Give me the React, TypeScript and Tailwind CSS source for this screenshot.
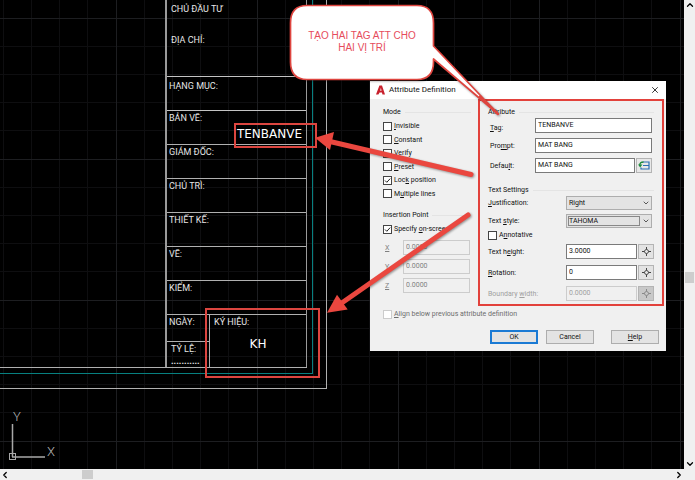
import type {ReactNode} from 'react';
import {ChevronDown, ChevronLeft, ChevronRight, ChevronUp, X} from 'lucide-react';

const modes = [
    {id: 'invisible', label: <><u>I</u>nvisible</>, checked: false},
    {id: 'constant', label: <><u>C</u>onstant</>, checked: false},
    {id: 'verify', label: <><u>V</u>erify</>, checked: false},
    {id: 'preset', label: <><u>P</u>reset</>, checked: false},
    {id: 'lock', label: <>Loc<u>k</u> position</>, checked: true},
    {id: 'multiple', label: <>M<u>u</u>ltiple lines</>, checked: false},
];

const titleRows = ['BẢN VẼ:', 'GIÁM ĐỐC:', 'CHỦ TRÌ:', 'THIẾT KẾ:', 'VẼ:', 'KIỂM:'];

function CheckRow({id, label, checked = false, disabled = false}: {
    id: string, label: ReactNode, checked?: boolean, disabled?: boolean
}) {
    return (
        <div className={disabled ? 'flex h-[10px] items-center text-[#6d6d6d]' : 'flex h-[10px] items-center'}>
            <span className="relative mr-[2px] h-[9px] w-[9px]">
                <input
                    id={id}
                    type="checkbox"
                    defaultChecked={checked}
                    disabled={disabled}
                    className="peer block h-[9px] w-[9px] appearance-none border border-[#444] bg-white disabled:border-[#ccc]"
                />
                <svg viewBox="0 0 9 9" className="pointer-events-none absolute inset-0 hidden peer-checked:block">
                    <path d="M2 4.5 L3.8 6.3 L7.2 2.6" fill="none" stroke="#222" strokeWidth="1"/>
                </svg>
            </span>
            <label htmlFor={id} className="whitespace-nowrap">{label}</label>
        </div>
    );
}

function Legend({children}: { children: ReactNode }) {
    return (
        <div className="flex h-[10px] items-center gap-1">
            <h3 className="whitespace-nowrap">{children}</h3>
            <span className="h-px flex-1 bg-[#e4e4e4]"/>
        </div>
    );
}

function PickButton({label, disabled = false}: { label: string, disabled?: boolean }) {
    return (
        <button
            aria-label={label}
            disabled={disabled}
            className="ml-px flex h-[15px] w-[16px] items-center justify-center border border-[#b4b4b4] bg-[#e3e3e3] text-[#444] disabled:bg-[#c8c8c8] disabled:text-[#888]"
        >
            <svg viewBox="0 0 11 11" className="h-[11px] w-[11px]">
                <path d="M5.5 1 V3.5 M5.5 7.5 V10 M1 5.5 H3.5 M7.5 5.5 H10" stroke="currentColor" strokeWidth="1"/>
                <circle cx="5.5" cy="5.5" r="2" fill="none" stroke="currentColor" strokeWidth="0.9"/>
            </svg>
        </button>
    );
}

function TitleBlock() {
    return (
        <div className="absolute left-0 top-0 h-[389px] w-[327px] border-b border-r border-[#b0b0b0] pb-[14px] pr-[13px]">
            <div className="h-full border-b border-r border-[#078080] pb-[5px] pr-[5px]">
                <div className="flex h-full justify-end border-b border-[#b0b0b0]">
                    <div className="flex w-[142px] flex-col border-l-2 border-r border-[#9a9a9a] font-['Roboto','Noto_Sans',sans-serif] text-[9px] leading-[10px] text-[#e6e6e6]">
                        <div className="h-[77px] border-b border-[#c4c4c4] pl-1 pt-1">
                            <p>CHỦ ĐẦU TƯ</p>
                            <p className="mt-[21px]">ĐỊA CHỈ:</p>
                        </div>
                        <div className="h-[34px] border-b border-[#c4c4c4] pl-[2px] pt-1">HẠNG MỤC:</div>
                        {titleRows.map((row) => (
                            <div key={row} className="relative h-[34px] border-b border-[#b0b0b0] pl-[2px] pt-[2px]">
                                {row}
                                {row === 'BẢN VẼ:' && (
                                    <span className="absolute right-1 top-4 font-['DejaVu_Sans',sans-serif] text-[12px] leading-[14px] text-white">
                                        TENBANVE
                                    </span>
                                )}
                            </div>
                        ))}
                        <div className="flex flex-1">
                            <div className="flex w-[43px] flex-col border-r border-[#b0b0b0]">
                                <div className="h-[27px] border-b border-[#b0b0b0] pl-[2px] pt-[2px]">NGÀY:</div>
                                <div className="pl-1 pt-[2px]">
                                    <p>TỶ LỆ:</p>
                                    <p className="mt-[2px] font-bold">...........</p>
                                </div>
                            </div>
                            <div className="flex-1 px-1 pt-[2px]">
                                <p>KÝ HIỆU:</p>
                                <p className="mt-[10px] text-center font-['DejaVu_Sans',sans-serif] text-[12px] leading-[14px] text-white">
                                    KH
                                </p>
                            </div>
                        </div>
                    </div>
                </div>
            </div>
        </div>
    );
}

function AttributeDialog() {
    const field = 'h-[15px] min-w-0 border border-[#7a7a7a] bg-white px-[2px] pb-[2px] text-[7px]';
    const select = 'h-[14px] w-full appearance-none border border-[#adadad] bg-[#e3e3e3] px-[2px] text-[7px]';

    return (
        <section
            role="dialog"
            aria-labelledby="dialog-title"
            className="absolute left-[370px] top-[81px] w-[296px] bg-[#f0f0f0] font-['Roboto',sans-serif] text-[7px] leading-[10px] text-[#111]"
        >
            <header className="flex h-[18px] items-center bg-white pl-[6px] pr-[6px]">
                <svg viewBox="0 0 9 10" className="mr-1 h-[10px] w-[9px]">
                    <path d="M0 9.5 L3.4 0.5 H6 L9 9.5 H6.5 L5.9 7.4 H3.6 L2.4 9.5 Z M4.2 5.7 H5.5 L4.9 2.8 Z" fill="#c8202c"/>
                </svg>
                <h2 id="dialog-title" className="flex-1 text-[8px]">Attribute Definition</h2>
                <button aria-label="Close"><X className="h-[10px] w-[10px]" strokeWidth={2}/></button>
            </header>

            <div className="flex pr-[2px]">
                <div className="flex-1 pl-[13px] pr-[7px] pt-2">
                    <Legend>Mode</Legend>
                    <div className="mt-1 flex h-[78px] flex-col justify-between">
                        {modes.map((mode) => <CheckRow key={mode.id} {...mode}/>)}
                    </div>
                    <div className="mt-[11px]">
                        <Legend>Insertion Point</Legend>
                    </div>
                    <div className="mt-1">
                        <CheckRow id="onscreen" label={<>Specify <u>o</u>n-screen</>} checked/>
                    </div>
                    <div className="mt-[6px] flex flex-col gap-1 text-[#808080]">
                        {['X', 'Y', 'Z'].map((axis) => (
                            <div key={axis} className="flex items-center">
                                <label htmlFor={axis} className="w-5 pl-[2px]"><u>{axis}</u></label>
                                <input
                                    id={axis}
                                    disabled
                                    defaultValue="0.0000"
                                    className="h-[15px] w-[67px] border border-[#ccc] px-[2px] pb-[2px] text-[7px]"
                                />
                            </div>
                        ))}
                    </div>
                </div>

                <div className="relative h-[207px] w-[186px] px-[10px] pt-2">
                    <Legend>Attribute</Legend>
                    <div className="mt-px flex flex-col gap-[5px] pr-[2px]">
                        <div className="flex items-center">
                            <label htmlFor="tag" className="w-[47px] pl-[2px] pt-1"><u>T</u>ag:</label>
                            <input id="tag" defaultValue="TENBANVE" className={field + ' flex-1'}/>
                        </div>
                        <div className="flex items-center">
                            <label htmlFor="prompt" className="w-[47px] pl-[2px]">Pro<u>m</u>pt:</label>
                            <input id="prompt" defaultValue="MAT BANG" className={field + ' flex-1'}/>
                        </div>
                        <div className="flex items-center">
                            <label htmlFor="default" className="w-[47px] pl-[2px]">Defau<u>l</u>t:</label>
                            <input id="default" defaultValue="MAT BANG" className={field + ' flex-1'}/>
                            <button
                                aria-label="Insert field"
                                className="ml-px flex h-[15px] w-[16px] items-center justify-center border border-[#b4b4b4] bg-[#e8e8e8]"
                            >
                                <svg viewBox="0 0 12 11" className="h-[11px] w-[12px]">
                                    <path d="M5 2 H11 V9 H3 V7.5 M5 5.5 H11" fill="none" stroke="#2a6fb5" strokeWidth="1.2"/>
                                    <path d="M5.5 2 C3 2 1.8 3 1.8 5" fill="none" stroke="#1c8a3c" strokeWidth="1.4"/>
                                    <path d="M0 4.5 H4.4 L2.2 7.5 Z" fill="#1c8a3c"/>
                                </svg>
                            </button>
                        </div>
                    </div>

                    <div className="mt-3">
                        <Legend>Text Settings</Legend>
                    </div>
                    <div className="mt-px flex flex-col gap-1 pr-[2px]">
                        <div className="flex items-center">
                            <label htmlFor="justification" className="w-[78px]"><u>J</u>ustification:</label>
                            <div className="relative flex-1">
                                <select id="justification" className={select}>
                                    <option>Right</option>
                                </select>
                                <ChevronDown className="pointer-events-none absolute right-[2px] top-[3px] h-2 w-2"/>
                            </div>
                        </div>
                        <div className="flex items-center">
                            <label htmlFor="style" className="w-[78px]">Text <u>s</u>tyle:</label>
                            <div className="relative flex-1">
                                <select id="style" className={select}>
                                    <option>TAHOMA</option>
                                </select>
                                <span className="pointer-events-none absolute inset-y-[2px] left-[2px] right-3 border border-[#888]"/>
                                <ChevronDown className="pointer-events-none absolute right-[2px] top-[3px] h-2 w-2"/>
                            </div>
                        </div>
                    </div>
                    <div className="mt-[2px]">
                        <CheckRow id="annotative" label={<>A<u>n</u>notative</>}/>
                    </div>
                    <div className="mt-1 flex flex-col gap-[6px]">
                        <div className="flex items-center">
                            <label htmlFor="height" className="w-[78px]">Text h<u>e</u>ight:</label>
                            <input id="height" defaultValue="3.0000" className={field + ' flex-1'}/>
                            <PickButton label="Pick text height"/>
                        </div>
                        <div className="flex items-center">
                            <label htmlFor="rotation" className="w-[78px]"><u>R</u>otation:</label>
                            <input id="rotation" defaultValue="0" className={field + ' flex-1'}/>
                            <PickButton label="Pick rotation"/>
                        </div>
                        <div className="flex items-center text-[#a0a0a0]">
                            <label htmlFor="boundary" className="w-[78px]">Boundary <u>w</u>idth:</label>
                            <input
                                id="boundary"
                                disabled
                                defaultValue="0.0000"
                                className="h-[15px] min-w-0 flex-1 border border-[#ccc] px-[2px] pb-[2px] text-[7px]"
                            />
                            <PickButton label="Pick boundary width" disabled/>
                        </div>
                    </div>
                    <div className="pointer-events-none absolute inset-0 border-2 border-[#e2413b]"/>
                </div>
            </div>

            <div className="mt-[3px] pl-[13px]">
                <CheckRow id="align" label={<><u>A</u>lign below previous attribute definition</>} disabled/>
            </div>
            <footer className="mt-[11px] flex justify-end pb-[7px] pr-[7px]">
                <button className="h-[14px] w-[48px] border-2 border-[#1a7ad4] bg-[#e3e3e3] leading-[10px]">OK</button>
                <button className="ml-2 h-[14px] w-[48px] border border-[#adadad] bg-[#e3e3e3]">Cancel</button>
                <button className="ml-[17px] h-[14px] w-[48px] border border-[#adadad] bg-[#e3e3e3]"><u>H</u>elp</button>
            </footer>
        </section>
    );
}

function Annotations() {
    return (
        <div className="pointer-events-none absolute inset-0">
            <div className="absolute left-[234px] top-[123px] h-[25px] w-[83px] border-2 border-[#dc4640]"/>
            <div className="absolute left-[205px] top-[308px] h-[70px] w-[115px] border-2 border-[#dc4640]"/>
            <svg className="absolute inset-0 h-full w-full drop-shadow-[1px_1px_1px_rgba(0,0,0,0.4)]">
                <g fill="#ea473f" stroke="#ea473f">
                    <path d="M330 141.5 L471 174.5" strokeWidth="5" strokeLinecap="round"/>
                    <path d="M315 137.7 L334 132 L330 150 Z" stroke="none"/>
                    <path d="M341 303.5 L468 215" strokeWidth="5" strokeLinecap="round"/>
                    <path d="M327 312.7 L337 294.7 L347.7 309.5 Z" stroke="none"/>
                </g>
                <path
                    d="M307 5.5 H417 Q433.5 5.5 433.5 23 V46 L498 114 L433.5 59 V62 Q433.5 79.5 417 79.5 H307 Q290.5 79.5 290.5 62 V23 Q290.5 5.5 307 5.5 Z"
                    fill="white" stroke="#de453f" strokeWidth="1.7" strokeLinejoin="round"
                />
                <path d="M480 96.5 L498 114" stroke="#de453f" strokeWidth="2.5" strokeLinecap="round"/>
            </svg>
            <p className="absolute left-[291px] top-[30px] w-[142px] px-3 text-center font-['Liberation_Sans',sans-serif] text-[10px] leading-[12px] text-[#e64c5c]">
                TẠO HAI TAG ATT CHO HAI VỊ TRÍ
            </p>
        </div>
    );
}

export default function App() {
    return (
        <div className="flex h-screen flex-col overflow-hidden bg-[#f0f0f0]">
            <div className="flex min-h-0 flex-1">
                <main className="relative flex-1 overflow-hidden bg-black">
                    <svg className="absolute inset-0 h-full w-full">
                        <defs>
                            <pattern id="grid" x="116" y="18" width="141" height="141" patternUnits="userSpaceOnUse">
                                <path
                                    d="M28.5 0 V141 M56.5 0 V141 M84.5 0 V141 M112.5 0 V141 M0 28.5 H141 M0 56.5 H141 M0 84.5 H141 M0 112.5 H141"
                                    stroke="#0e0e10"
                                />
                                <path d="M0.5 0 V141 M0 0.5 H141" stroke="#1d1e21"/>
                            </pattern>
                        </defs>
                        <rect width="100%" height="100%" fill="url(#grid)"/>
                        <g fill="none" stroke="#a8a8a8">
                            <path d="M12.5 424 V457 M12 457 H45" strokeWidth="1.5"/>
                            <rect x="9.5" y="453.5" width="6" height="6"/>
                        </g>
                        <g fill="#b8b8b8" fontFamily="Roboto, sans-serif" fontSize="13" fontWeight="300">
                            <text x="13" y="421">Y</text>
                            <text x="47" y="456">X</text>
                        </g>
                    </svg>
                    <TitleBlock/>
                    <AttributeDialog/>
                    <Annotations/>
                </main>
                <div className="flex w-[11px] flex-col items-center justify-between">
                    <ChevronUp className="h-[10px] w-[10px]" strokeWidth={3}/>
                    <span className="mt-[86px] h-[11px] w-[9px] bg-[#cdcdcd]"/>
                    <ChevronDown className="h-[10px] w-[10px]" strokeWidth={3}/>
                </div>
            </div>
            <div className="flex h-[11px] items-center justify-between pr-[11px]">
                <div className="flex items-center">
                    <ChevronLeft className="h-[10px] w-[10px]" strokeWidth={3}/>
                    <span className="ml-[72px] h-[9px] w-[11px] bg-[#cdcdcd]"/>
                </div>
                <ChevronRight className="h-[10px] w-[10px]" strokeWidth={3}/>
            </div>
        </div>
    );
};
